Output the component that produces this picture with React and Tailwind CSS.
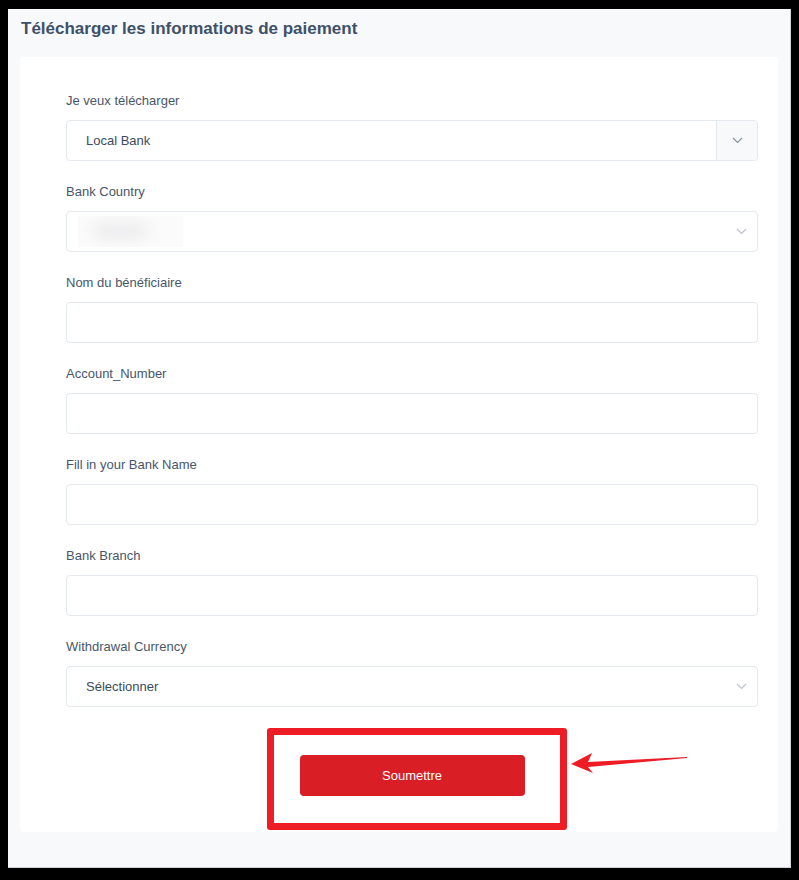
import React from 'react';

const font = { fontFamily: '"Liberation Sans", Arial, sans-serif' };

const Chevron = ({ className }) => (
    <svg width="11" height="7" viewBox="0 0 11 7" className={className} fill="none">
        <path d="M1 1l4.5 4.5L10 1" stroke="currentColor" strokeWidth="1.2" />
    </svg>
);

const Field = ({ label, children }) => (
    <div>
        <div className="text-[13px] leading-[18px] text-[#48566a] mb-[10px]">{label}</div>
        {children}
    </div>
);

const TextInput = () => (
    <div className="h-[41px] rounded-[4px] border border-[#e4e8ef] bg-white" />
);

const Select = ({ value, boxed, children }) => (
    <div className="relative h-[41px] rounded-[4px] border border-[#e4e8ef] bg-white flex items-center">
        {value && <span className="pl-[19px] text-[13px] text-[#3d4a5c]">{value}</span>}
        {children}
        {boxed ? (
            <div className="absolute right-0 top-0 bottom-0 w-[41px] flex items-center justify-center bg-[#f8f9fb] border-l border-[#e4e8ef] rounded-r-[4px] text-[#8a93a3]">
                <Chevron />
            </div>
        ) : (
            <div className="absolute right-[10px] top-0 bottom-0 flex items-center text-[#bcc3cf]">
                <Chevron />
            </div>
        )}
    </div>
);

export default function App() {
    return (
        <div className="w-[799px] h-[880px] bg-black pt-[9px] pl-[8px]" style={font}>
            <div className="w-[783px] h-[859px] bg-[#f8f9fb] border-r border-b border-[#cfd3d9] pl-[12px]">
                <h2 className="pt-[10px] h-[48px] text-[17px] leading-[20px] font-bold text-[#3f5169] pl-px">
                    Télécharger les informations de paiement
                </h2>
                <div className="w-[758px] h-[775px] bg-white rounded-[4px] pt-[35px] pl-[46px] pr-[20px]">
                    <div className="flex flex-col gap-[22px]">
                        <Field label="Je veux télécharger">
                            <Select value="Local Bank" boxed />
                        </Field>
                        <Field label="Bank Country">
                            <Select>
                                <div className="ml-[11px] w-[105px] h-[31px] bg-[#fbfbfb] overflow-hidden relative">
                                    <div className="absolute left-[14px] top-[7px] w-[56px] h-[16px] rounded-full bg-[#ececee] blur-[7px]" />
                                </div>
                            </Select>
                        </Field>
                        <Field label="Nom du bénéficiaire">
                            <TextInput />
                        </Field>
                        <Field label="Account_Number">
                            <TextInput />
                        </Field>
                        <Field label="Fill in your Bank Name">
                            <TextInput />
                        </Field>
                        <Field label="Bank Branch">
                            <TextInput />
                        </Field>
                        <Field label="Withdrawal Currency">
                            <Select value="Sélectionner" />
                        </Field>
                    </div>
                    <div className="flex justify-center mt-[48px]">
                        <div className="relative">
                            <button className="w-[225px] h-[41px] rounded-[4px] bg-[#d91e25] text-white text-[13px] font-medium">
                                Soumettre
                            </button>
                            <div className="absolute left-[-33px] top-[-27px] w-[300px] h-[102px] border-[7px] border-[#ee1c25] rounded-[3px]" />
                            <svg className="absolute left-[270px] top-[-6px]" width="120" height="24" viewBox="0 0 120 24">
                                <polygon points="1,15 22,4 18,13 117,8 117,9 18,18 23,24" fill="#ee1c25" />
                            </svg>
                        </div>
                    </div>
                </div>
            </div>
        </div>
    );
}
